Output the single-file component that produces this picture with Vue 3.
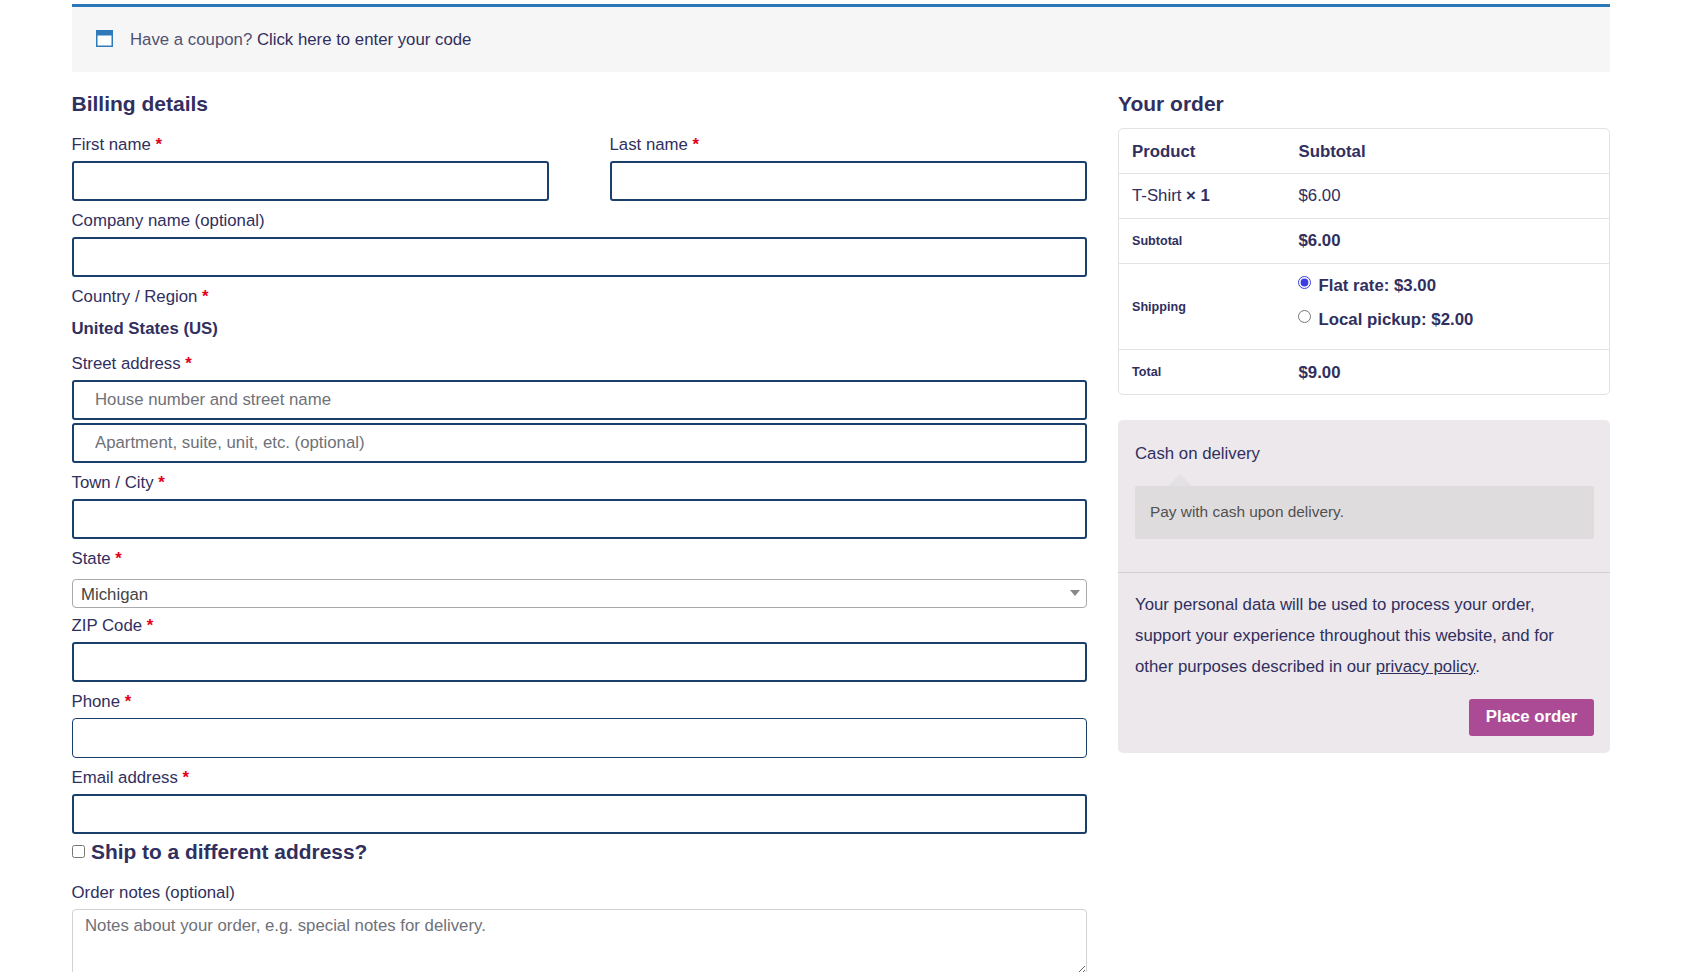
<script setup>
const rows = [
  { subtotal: 'Subtotal', value: '$6.00' },
]
</script>

<template>
  <div class="page">
    <div class="notice">
      <svg class="notice-icon" width="17" height="17" viewBox="0 0 17 17" aria-hidden="true">
        <rect x="0.75" y="0.75" width="15.5" height="15.5" fill="#fff" stroke="#2f7ab8" stroke-width="1.5" />
        <rect x="0" y="0" width="17" height="5.5" fill="#2f7ab8" />
      </svg>
      <span class="notice-text">Have a coupon? <a class="notice-link">Click here to enter your code</a></span>
    </div>

    <div class="columns">
      <form class="billing">
        <h3 class="heading">Billing details</h3>

        <div class="two-up">
          <div class="field">
            <label>First name <b class="req">*</b></label>
            <input class="input" type="text" />
          </div>
          <div class="field">
            <label>Last name <b class="req">*</b></label>
            <input class="input" type="text" />
          </div>
        </div>

        <div class="field">
          <label>Company name (optional)</label>
          <input class="input" type="text" />
        </div>

        <div class="field country">
          <label>Country / Region <b class="req">*</b></label>
          <strong class="country-value">United States (US)</strong>
        </div>

        <div class="field street">
          <label>Street address <b class="req">*</b></label>
          <input class="input" type="text" placeholder="House number and street name" />
          <input class="input second" type="text" placeholder="Apartment, suite, unit, etc. (optional)" />
        </div>

        <div class="field tight">
          <label>Town / City <b class="req">*</b></label>
          <input class="input" type="text" />
        </div>

        <div class="field state">
          <label>State <b class="req">*</b></label>
          <div class="select">
            <span>Michigan</span>
            <i class="caret"></i>
          </div>
        </div>

        <div class="field zip">
          <label>ZIP Code <b class="req">*</b></label>
          <input class="input" type="text" />
        </div>

        <div class="field">
          <label>Phone <b class="req">*</b></label>
          <input class="input thin" type="text" />
        </div>

        <div class="field tight">
          <label>Email address <b class="req">*</b></label>
          <input class="input" type="text" />
        </div>

        <h3 class="ship">
          <input class="ship-check" type="checkbox" />
          <span>Ship to a different address?</span>
        </h3>

        <div class="field notes">
          <label>Order notes (optional)</label>
          <textarea class="textarea" placeholder="Notes about your order, e.g. special notes for delivery."></textarea>
        </div>
      </form>

      <aside class="order">
        <h3 class="heading">Your order</h3>

        <table class="table">
          <thead>
            <tr>
              <th class="c1 head">Product</th>
              <th class="head">Subtotal</th>
            </tr>
          </thead>
          <tbody>
            <tr>
              <td class="c1">T-Shirt <b>× 1</b></td>
              <td>$6.00</td>
            </tr>
          </tbody>
          <tfoot>
            <tr v-for="r in rows" :key="r.subtotal">
              <th class="c1 small">{{ r.subtotal }}</th>
              <td class="strong">{{ r.value }}</td>
            </tr>
            <tr>
              <th class="c1 small shipping-label">Shipping</th>
              <td class="shipping">
                <label class="method"><input type="radio" name="ship" checked /><span>Flat rate: $3.00</span></label>
                <label class="method"><input type="radio" name="ship" /><span>Local pickup: $2.00</span></label>
              </td>
            </tr>
            <tr>
              <th class="c1 small">Total</th>
              <td class="strong total-value">$9.00</td>
            </tr>
          </tfoot>
        </table>

        <div class="payment">
          <div class="method-block">
            <div class="cod">Cash on delivery</div>
            <div class="cod-box">Pay with cash upon delivery.</div>
          </div>
          <div class="place">
            <p class="privacy">Your personal data will be used to process your order, support your experience throughout this website, and for other purposes described in our <a class="policy">privacy policy</a>.</p>
            <div class="actions">
              <button class="button" type="button">Place order</button>
            </div>
          </div>
        </div>
      </aside>
    </div>
  </div>
</template>

<style>
html, body { margin: 0; background: #fff; overflow: hidden; }
</style>

<style scoped>
.page {
  height: 972px;
  overflow: hidden;
  box-sizing: border-box;
  padding: 4px 80px 0 72px;
  font-family: "Liberation Sans", Arial, sans-serif;
  font-size: 16.8px;
  color: #302f5e;
}
.notice {
  box-sizing: border-box;
  height: 68px;
  border-top: 3px solid #2a78b8;
  background: #f6f6f6;
  display: flex;
  align-items: center;
  padding-left: 24px;
  gap: 17px;
}
.notice-icon { flex: none; margin-top: -2px; }
.notice-text { color: #515170; }
.notice-link { color: #302f5e; }
.columns {
  display: flex;
  gap: 31px;
  align-items: flex-start;
}
.billing { width: 1015px; flex: none; }
.order { width: 492px; flex: none; }
.heading {
  margin: 0;
  padding-top: 17px;
  font-size: 21px;
  line-height: 29px;
  font-weight: 700;
  color: #302f5e;
}
.billing .heading { margin-left: -0.5px; }
.order .heading { margin-bottom: 10px; }
.two-up {
  display: grid;
  grid-template-columns: 477px 477px;
  column-gap: 61px;
  margin-top: 6.5px;
}
.field { padding-top: 7.7px; }
.field label { display: block; line-height: 26px; margin: 0 0 2.5px -0.5px; }
.field.tight { padding-top: 6.7px; }
.field.tight label { margin-bottom: 3.5px; }
.field.street { padding-top: 7.2px; }
.field.street label { margin-bottom: 3.5px; }
.req { color: #e2001a; font-weight: 700; }
.input {
  display: block;
  box-sizing: border-box;
  width: 100%;
  height: 40px;
  padding: 0 21px;
  margin: 0;
  border: 2px solid #1a3f6b;
  border-radius: 3px;
  background: #fff;
  outline: none;
  font: 16.8px "Liberation Sans", Arial, sans-serif;
  color: #302f5e;
}
.input::placeholder, .textarea::placeholder { color: #6f7178; opacity: 1; }
.input.second { margin-top: 3px; }
.input.thin { border-width: 1px; border-radius: 4px; }
.field.country { padding: 6.7px 0 2px; }
.field.country label { margin-bottom: 0; }
.country-value { display: block; line-height: 26px; padding-top: 6px; margin-left: -0.5px; }
.field.state { padding-top: 6.7px; }
.field.state label { margin-bottom: 6.5px; }
.select {
  box-sizing: border-box;
  height: 29px;
  border: 1px solid #aaa;
  border-radius: 4px;
  display: flex;
  align-items: center;
  justify-content: space-between;
  padding: 3px 7px 0 8px;
  color: #444;
}
.caret {
  width: 0;
  height: 0;
  border-left: 5px solid transparent;
  border-right: 5px solid transparent;
  border-top: 6px solid #888;
  margin: -3px -1px 0 0;
}
.field.zip { padding-top: 5.5px; }
.ship {
  margin: -0.5px 0 0;
  height: 36px;
  display: flex;
  align-items: center;
  font-size: 20.9px;
  font-weight: 700;
}
.ship-check { width: 13px; height: 13px; margin: 0 6px 0 0; flex: none; }
.field.notes { padding-top: 10px; }
.field.notes label { margin-bottom: 3.5px; }
.textarea {
  display: block;
  box-sizing: border-box;
  width: 100%;
  height: 66px;
  margin: 0;
  padding: 5px 12px;
  border: 1px solid #d2d2d2;
  border-radius: 4px;
  outline: none;
  font: 16.8px/1.3 "Liberation Sans", Arial, sans-serif;
  color: #302f5e;
  background: #fff;
}
.table {
  width: 100%;
  table-layout: fixed;
  border-collapse: separate;
  border-spacing: 0;
  border: 1px solid #e3e3e3;
  border-radius: 5px;
  margin-bottom: 25px;
}
.table th, .table td {
  box-sizing: border-box;
  height: 45px;
  padding: 0 13px;
  text-align: left;
  border-top: 1px solid #e3e3e3;
  vertical-align: middle;
  font-size: 16.8px;
}
.table thead th { border-top: 0; height: 44px; padding-top: 2px; }
.table .c1 { width: 166.5px; }
.table .small { font-size: 12.6px; font-weight: 700; padding-bottom: 1px; }
.table .shipping-label { padding-bottom: 0; padding-top: 1px; }
.table .strong { font-weight: 700; }
.table .total-value { padding-top: 2px; }
.table td.shipping { height: 86px; padding-bottom: 11px; }
.method {
  display: flex;
  align-items: flex-start;
  height: 34px;
  line-height: 38px;
  font-weight: 700;
}
.method input {
  width: 13px;
  height: 13px;
  margin: 9px 8px 0 -1px;
  accent-color: #3b3fe0;
  flex: none;
}
.payment {
  background: #ece8ec;
  border-radius: 5px;
}
.method-block {
  padding: 21px 16px 33px 17px;
  border-bottom: 1px solid #d3ced2;
}
.cod { line-height: 26px; }
.cod-box {
  position: relative;
  box-sizing: border-box;
  height: 53px;
  margin-top: 19px;
  padding: 14px 15px;
  background: #dfdcde;
  border-radius: 2px;
  color: #515151;
  font-size: 15.4px;
  line-height: 24px;
}
.cod-box::before {
  content: "";
  position: absolute;
  left: 33px;
  top: -12px;
  width: 0;
  height: 0;
  border-left: 12px solid transparent;
  border-right: 12px solid transparent;
  border-bottom: 12px solid #e4e1e4;
}
.place { padding: 16px 16px 17px 17px; }
.privacy {
  margin: 0;
  line-height: 31px;
}
.policy { text-decoration: underline; }
.actions {
  display: flex;
  justify-content: flex-end;
  margin-top: 17px;
}
.button {
  width: 125px;
  height: 37px;
  border: 0;
  border-radius: 3px;
  background: #ab4b95;
  color: #fff;
  font: 700 16.8px/1 "Liberation Sans", Arial, sans-serif;
  padding: 0 0 0;
}
</style>
